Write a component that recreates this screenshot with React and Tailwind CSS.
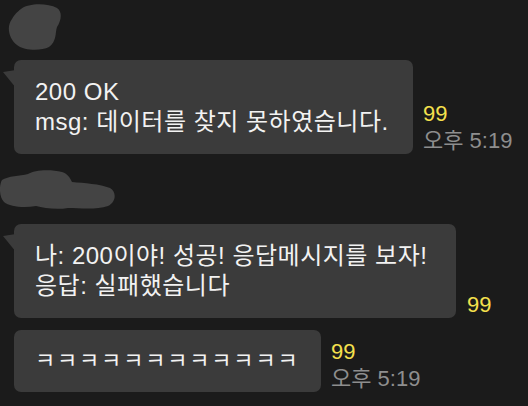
import React from 'react';

const font = { fontFamily: '"Liberation Sans", "Noto Sans CJK KR", sans-serif' };

const Blob = ({ w, h, d }) => (
  <svg width={w} height={h} viewBox={`0 0 ${w} ${h}`} className="block">
    <path d={d} fill="#444444" />
  </svg>
);

const Tail = () => (
  <svg width="13" height="20" viewBox="0 0 13 20" className="absolute left-[-11px] top-[10px]">
    <path d="M0 2 L13 0 L13 18 Z" fill="#3b3b3b" />
  </svg>
);

const Meta = ({ count, time }) => (
  <div className="flex flex-col text-[22px] leading-[27px]">
    <span className="text-[#f4e04d]">{count}</span>
    {time && <span className="text-[#8e8e8e]">{time}</span>}
  </div>
);

const Bubble = ({ width, tail, children, className = '' }) => (
  <div
    className={`relative rounded-[7px] bg-[#3b3b3b] leading-[30px] text-[#f2f2f2] ${className}`}
    style={{ width }}
  >
    {tail && <Tail />}
    {children}
  </div>
);

export default function App() {
  return (
    <div className="h-[406px] w-[528px] overflow-hidden bg-[#1b1b1b]" style={font}>
      <div className="flex flex-col pl-[14px]">
        <div className="ml-[-7px] mt-[3px]">
          <Blob
            w={54}
            h={47}
            d="M14 6 C22 0 40 0 50 5 C56 9 54 18 50 24 C48 30 50 38 42 44 C34 48 18 48 10 42 C2 36 -1 24 5 16 C8 11 10 9 14 6 Z"
          />
        </div>
        <div className="mt-[10px] flex items-end gap-[10px]">
          <Bubble width={399} tail className="px-[21px] py-[17px] text-[24px] tracking-[0.5px]">
            <div>200 OK</div>
            <div>msg: 데이터를 찾지 못하였습니다.</div>
          </Bubble>
          <Meta count="99" time="오후 5:19" />
        </div>

        <div className="ml-[-14px] mt-[16px]">
          <Blob
            w={116}
            h={40}
            d="M2 10 C8 6 20 6 28 4 C34 0 50 -1 62 2 C68 4 70 8 72 12 C84 13 100 14 110 18 C117 22 116 32 108 36 C96 40 80 38 68 38 C56 40 44 38 36 36 C24 38 10 37 4 32 C-1 27 -1 15 2 10 Z"
          />
        </div>
        <div className="mt-[14px] flex items-end gap-[11px]">
          <Bubble width={442} tail className="px-[21px] py-[17px] text-[24px] tracking-[0.5px]">
            <div>나: 200이야! 성공! 응답메시지를 보자!</div>
            <div>응답: 실패했습니다</div>
          </Bubble>
          <Meta count="99" />
        </div>

        <div className="mt-[12px] flex items-end gap-[10px]">
          <Bubble width={307} className="whitespace-nowrap px-[21px] py-[16px] text-[22px] tracking-[1.8px]">
            <div>ㅋㅋㅋㅋㅋㅋㅋㅋㅋㅋㅋㅋ</div>
          </Bubble>
          <Meta count="99" time="오후 5:19" />
        </div>
      </div>
    </div>
  );
}
